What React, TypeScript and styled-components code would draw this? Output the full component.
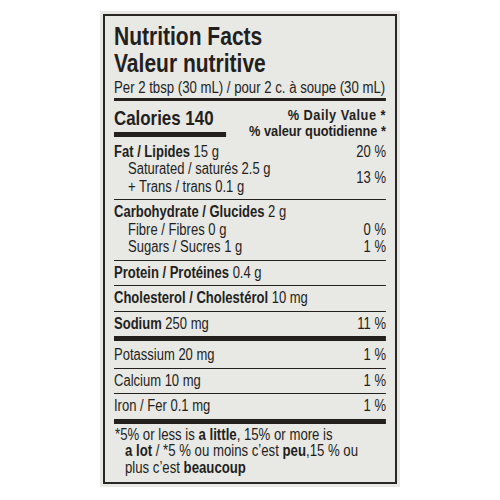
import styled, { createGlobalStyle } from 'styled-components';

const GlobalStyle = createGlobalStyle`
  body {
    margin: 0;
    background: #ffffff;
  }
`;

// the label face is a condensed grotesk; no condensed font is installed,
// so the content block is laid out wide and squeezed horizontally
const SQUEEZE = 0.824;

const Page = styled.div`
  width: 500px;
  height: 500px;
  display: flex;
  justify-content: center;
  padding-top: 11px;
  box-sizing: border-box;
  font-family: 'Liberation Sans', Arial, sans-serif;
  color: #231f1c;
`;

const Card = styled.div`
  width: 300px;
  height: 476px;
  box-sizing: border-box;
  padding: 3px;
  background: #e8e8e5;
`;

const Label = styled.div`
  height: 100%;
  box-sizing: border-box;
  border: 2px solid #2a2623;
  padding: 7px 9px 6px 9px;
`;

const Condensed = styled.div`
  width: ${272 / SQUEEZE}px;
  transform: scaleX(${SQUEEZE});
  transform-origin: left top;
`;

const Title = styled.h1`
  margin: 0;
  font-size: 25.5px;
  line-height: 27px;
  font-weight: 700;
`;

const Serving = styled.div`
  font-size: 16px;
  line-height: 20px;
  margin-top: 1px;
  white-space: nowrap;
`;

const Rule = styled.div<{ $h: number }>`
  height: ${(p) => p.$h}px;
  background: #24201d;
`;

const CaloriesRow = styled.div`
  display: flex;
  justify-content: space-between;
  align-items: flex-start;
  padding-top: 6px;
`;

const Calories = styled.div`
  font-size: 20.5px;
  line-height: 22px;
  font-weight: 700;
`;

const CaloriesBar = styled.div`
  width: ${112 / SQUEEZE}px;
  height: 5px;
  margin-top: 3px;
  background: #24201d;
`;

const DailyValue = styled.div`
  font-size: 15.5px;
  line-height: 16px;
  font-weight: 700;
  text-align: right;
`;

const Wide = styled.span`
  letter-spacing: 0.6px;
`;

const Section = styled.div<{ $top?: number; $bottom?: number }>`
  padding: ${(p) => p.$top ?? 3}px 0 ${(p) => p.$bottom ?? 4}px;
  font-size: 15.8px;
  line-height: 17.5px;
  white-space: nowrap;
`;

const Line = styled.div<{ $indent?: boolean }>`
  display: flex;
  justify-content: space-between;
  align-items: center;
  padding-left: ${(p) => (p.$indent ? 14 / SQUEEZE : 0)}px;
`;

const Pair = styled.div`
  display: flex;
  flex-direction: column;
`;

const Footnote = styled.p`
  margin: 0;
  padding: 3px 0 0 ${11 / SQUEEZE}px;
  text-indent: ${-10 / SQUEEZE}px;
  font-size: 16px;
  line-height: 16.5px;
  white-space: nowrap;
`;

export default function App() {
  return (
    <Page>
      <GlobalStyle />
      <Card>
        <Label>
          <Condensed>
            <Title>
              Nutrition Facts
              <br />
              Valeur nutritive
            </Title>
            <Serving>Per 2 tbsp (30 mL) / pour 2 c. à soupe (30 mL)</Serving>
            <Rule $h={3} />

            <CaloriesRow>
              <div>
                <Calories>Calories 140</Calories>
                <CaloriesBar />
              </div>
              <DailyValue>
                <Wide>% Daily Value *</Wide>
                <br />
                % valeur quotidienne *
              </DailyValue>
            </CaloriesRow>

            <Section $top={3.5}>
              <Line>
                <span><b>Fat / Lipides</b> 15 g</span>
                <span>20 %</span>
              </Line>
              <Line $indent>
                <Pair>
                  <span>Saturated / saturés 2.5 g</span>
                  <span>+ Trans / trans 0.1 g</span>
                </Pair>
                <span>13 %</span>
              </Line>
            </Section>
            <Rule $h={1} />

            <Section>
              <Line>
                <span><b>Carbohydrate / Glucides</b> 2 g</span>
              </Line>
              <Line $indent>
                <span>Fibre / Fibres 0 g</span>
                <span>0 %</span>
              </Line>
              <Line $indent>
                <span>Sugars / Sucres 1 g</span>
                <span>1 %</span>
              </Line>
            </Section>
            <Rule $h={1} />

            <Section>
              <Line>
                <span><b>Protein / Protéines</b> 0.4 g</span>
              </Line>
            </Section>
            <Rule $h={1} />

            <Section>
              <Line>
                <span><b>Cholesterol / Cholestérol</b> 10 mg</span>
              </Line>
            </Section>
            <Rule $h={1} />

            <Section>
              <Line>
                <span><b>Sodium</b> 250 mg</span>
                <span>11 %</span>
              </Line>
            </Section>
            <Rule $h={5} />

            <Section $top={5}>
              <Line>
                <span>Potassium 20 mg</span>
                <span>1 %</span>
              </Line>
            </Section>
            <Rule $h={1} />

            <Section>
              <Line>
                <span>Calcium 10 mg</span>
                <span>1 %</span>
              </Line>
            </Section>
            <Rule $h={1} />

            <Section>
              <Line>
                <span>Iron / Fer 0.1 mg</span>
                <span>1 %</span>
              </Line>
            </Section>
            <Rule $h={5} />

            <Footnote>
              *5% or less is <b>a little</b>, 15% or more is
              <br />
              <b>a lot</b> / *5 % ou moins c’est <b>peu</b>,15 % ou
              <br />
              plus c’est <b>beaucoup</b>
            </Footnote>
          </Condensed>
        </Label>
      </Card>
    </Page>
  );
}
